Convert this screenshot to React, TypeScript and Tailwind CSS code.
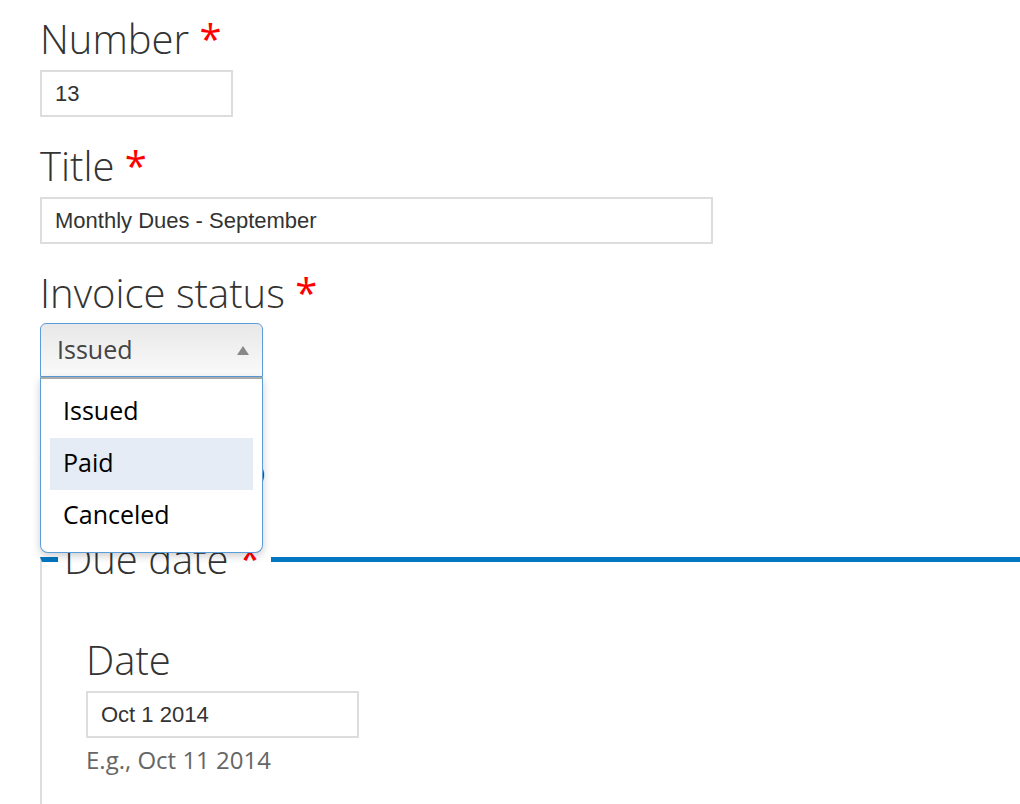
import { useState } from 'react'

const labelFont = { fontFamily: '"Open Sans", "DejaVu Sans", sans-serif' }
const inputFont = { fontFamily: '"Liberation Sans", Arial, sans-serif' }

function Label({ text, required }: { text: string; required?: boolean }) {
    return (
        <div className="text-[40px] leading-[48px] font-light text-[#333]" style={labelFont}>
            {text}
            {required && <span className="text-[#f00] font-normal"> *</span>}
        </div>
    )
}

function TextInput({ value, width }: { value: string; width: string }) {
    return (
        <div
            className={`${width} h-[47px] border-2 border-[#ddd] bg-white pl-[13px] flex items-center text-[22px] text-[#333]`}
            style={inputFont}
        >
            {value}
        </div>
    )
}

const statuses = ['Issued', 'Paid', 'Canceled']

export default function App() {
    const [hovered] = useState('Paid')

    return (
        <div className="min-h-screen bg-white overflow-hidden pl-[40px] pt-[15px]">
            {/* Number */}
            <div className="mb-[25px]">
                <div className="mb-[7px]"><Label text="Number" required /></div>
                <TextInput value="13" width="w-[193px]" />
            </div>

            {/* Title */}
            <div className="mb-[25px]">
                <div className="mb-[7px]"><Label text="Title" required /></div>
                <TextInput value="Monthly Dues - September" width="w-[673px]" />
            </div>

            {/* Invoice status */}
            <div>
                <div className="mb-[6px]"><Label text="Invoice status" required /></div>
                <div className="relative w-[223px] z-10">
                    <div
                        className="h-[54px] border-[1.5px] border-[#5b9dd9] rounded-t-[6px] bg-linear-to-b from-[#e8e8e8] to-[#fafafa] flex items-center justify-between pl-[16px] pr-[13px] text-[25px] text-[#444]"
                        style={labelFont}
                    >
                        <span>Issued</span>
                        <span className="w-0 h-0 border-l-[6px] border-r-[6px] border-b-[9px] border-l-transparent border-r-transparent border-b-[#888]" />
                    </div>
                    <div className="absolute left-0 top-full w-[223px] bg-white border-[1.5px] border-t-2 border-[#5b9dd9] border-t-[#aaa] rounded-b-[8px] shadow-[0_3px_8px_rgba(0,0,0,0.2)] pt-[7px] pb-[10px] px-[9px]">
                        {statuses.map(s => (
                            <div
                                key={s}
                                className={`h-[52px] flex items-center pl-[13px] pb-[3px] text-[25px] text-black ${s === hovered ? 'bg-[#e5ecf5]' : ''}`}
                                style={labelFont}
                            >
                                {s}
                            </div>
                        ))}
                    </div>
                </div>
            </div>

            {/* Partly hidden under the dropdown */}
            <div className="pt-[70px] pb-[40px]">
                <Label text="Total in Euro" />
            </div>

            {/* Due date */}
            <fieldset className="border-t-[5px] border-t-[#0077c0] border-l-2 border-l-[#ddd] border-r-0 border-b-0 pl-[44px] pb-[40px]">
                <legend className="-ml-[28px] pl-[6px] pr-[10px] text-[40px] leading-[48px] font-light text-[#333]" style={labelFont}>
                    Due date<span className="text-[#f00] font-normal"> *</span>
                </legend>
                <div className="mt-[53px] mb-[7px]"><Label text="Date" /></div>
                <TextInput value="Oct 1 2014" width="w-[273px]" />
                <div className="mt-[7px] text-[24px] leading-[30px] text-[#666]" style={labelFont}>
                    E.g., Oct 11 2014
                </div>
            </fieldset>
        </div>
    )
}
